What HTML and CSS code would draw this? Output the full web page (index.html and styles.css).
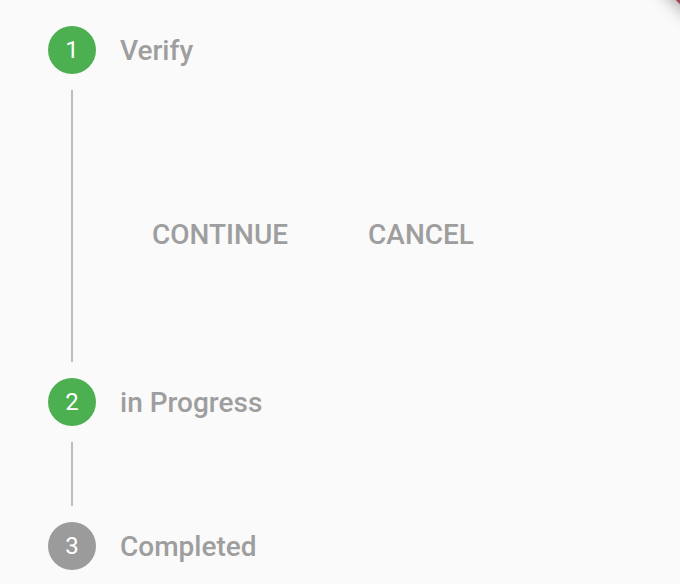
FILE: index.html
```html
<!DOCTYPE html>
<html lang="en">
<head>
<meta charset="utf-8">
<title>Order status</title>
<link rel="stylesheet" href="styles.css">
</head>
<body>
<div class="ribbon"></div>
<ol class="stepper">
  <li class="step step-open">
    <span class="badge">1</span>
    <span class="title">Verify</span>
    <span class="line"></span>
    <div class="actions">
      <button type="button">CONTINUE</button>
      <button type="button">CANCEL</button>
    </div>
  </li>
  <li class="step">
    <span class="badge">2</span>
    <span class="title">in Progress</span>
    <span class="line"></span>
  </li>
  <li class="step">
    <span class="badge badge-idle">3</span>
    <span class="title">Completed</span>
  </li>
</ol>
</body>
</html>
```
FILE: styles.css
```css
* {
  box-sizing: border-box;
}

body {
  margin: 0;
  background: #fafafa;
  font-family: Roboto, "Liberation Sans", sans-serif;
  color: #9e9e9e;
  overflow: hidden;
}

.ribbon {
  position: absolute;
  top: -17px;
  right: -27px;
  width: 48px;
  height: 20px;
  background: #a8404f;
  box-shadow: 0 0 18px rgba(0, 0, 0, 0.45);
  transform: rotate(45deg);
}

.stepper {
  list-style: none;
  margin: 0;
  padding: 26px 48px 0;
}

.step {
  display: grid;
  grid-template-columns: 48px 1fr;
  grid-template-rows: 48px 96px;
  column-gap: 24px;
  align-items: center;
}

.step:last-child {
  grid-template-rows: 48px;
}

.step-open {
  grid-template-rows: 48px 304px;
}

.badge {
  display: grid;
  place-items: center;
  height: 48px;
  border-radius: 50%;
  background: #4caf50;
  color: #fff;
  font-size: 24px;
}

.badge-idle {
  background: #9b9b9b;
}

.title {
  font-size: 28px;
  font-weight: 500;
}

.line {
  align-self: stretch;
  justify-self: center;
  width: 2px;
  margin: 16px 0;
  background: #bdbdbd;
}

.actions {
  display: flex;
  gap: 16px;
  align-self: start;
  height: 96px;
  margin-top: 112px;
}

.actions button {
  height: 96px;
  padding: 0 32px;
  border: 0;
  background: none;
  color: inherit;
  font: 500 28px Roboto, "Liberation Sans", sans-serif;
}
```
